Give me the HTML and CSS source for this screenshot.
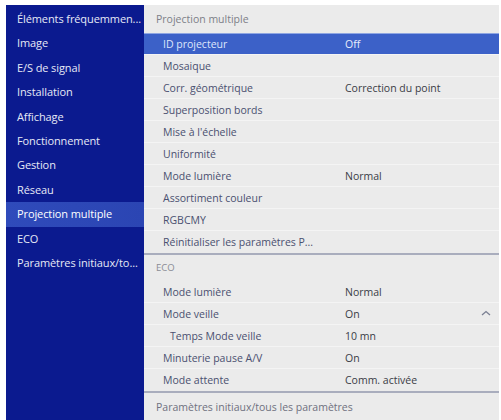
FILE: index.html
```html
<!DOCTYPE html>
<html lang="fr">
<head>
<meta charset="utf-8">
<title>Menu de configuration</title>
<link rel="stylesheet" href="styles.css">
</head>
<body>
<div class="menu">
  <nav class="side">
    <div class="side-item">Éléments fréquemmen...</div>
    <div class="side-item">Image</div>
    <div class="side-item">E/S de signal</div>
    <div class="side-item">Installation</div>
    <div class="side-item">Affichage</div>
    <div class="side-item">Fonctionnement</div>
    <div class="side-item">Gestion</div>
    <div class="side-item">Réseau</div>
    <div class="side-item active">Projection multiple</div>
    <div class="side-item">ECO</div>
    <div class="side-item">Paramètres initiaux/to...</div>
  </nav>
  <section class="panel">
    <div class="group-title">Projection multiple</div>
    <div class="rows">
      <div class="row selected"><span class="label">ID projecteur</span><span class="value">Off</span></div>
      <div class="row"><span class="label">Mosaique</span><span class="value"></span></div>
      <div class="row"><span class="label">Corr. géométrique</span><span class="value">Correction du point</span></div>
      <div class="row"><span class="label">Superposition bords</span><span class="value"></span></div>
      <div class="row"><span class="label">Mise à l'échelle</span><span class="value"></span></div>
      <div class="row"><span class="label">Uniformité</span><span class="value"></span></div>
      <div class="row"><span class="label">Mode lumière</span><span class="value">Normal</span></div>
      <div class="row"><span class="label">Assortiment couleur</span><span class="value"></span></div>
      <div class="row"><span class="label">RGBCMY</span><span class="value"></span></div>
      <div class="row"><span class="label">Réinitialiser les paramètres P...</span><span class="value"></span></div>
    </div>
    <div class="group-title eco">ECO</div>
    <div class="rows">
      <div class="row"><span class="label">Mode lumière</span><span class="value">Normal</span></div>
      <div class="row"><span class="label">Mode veille</span><span class="value">On</span><span class="chev">
        <svg width="10" height="6" viewBox="0 0 10 6"><path d="M1 5 L5 1.5 L9 5" fill="none" stroke="#7a7f92" stroke-width="1.3"/></svg>
      </span></div>
      <div class="row sub"><span class="label">Temps Mode veille</span><span class="value">10 mn</span></div>
      <div class="row"><span class="label">Minuterie pause A/V</span><span class="value">On</span></div>
      <div class="row"><span class="label">Mode attente</span><span class="value">Comm. activée</span></div>
    </div>
    <div class="group-title footer">Paramètres initiaux/tous les paramètres</div>
  </section>
</div>
</body>
</html>
```
FILE: styles.css
```css
html, body {
  margin: 0;
  padding: 0;
  background: #ffffff;
}

body {
  font-family: "Open Sans", "Noto Sans", sans-serif;
  font-size: 10.5px;
}

.menu {
  display: flex;
  margin: 5px 2px 0 6px;
  height: 415px;
}

/* left category column */
.side {
  width: 138px;
  background: #0b1a8f;
  padding-top: 2px;
  display: flex;
  flex-direction: column;
}

.side-item {
  height: 24.4px;
  line-height: 24.4px;
  padding-left: 11px;
  color: #e6e9f6;
  white-space: nowrap;
  font-size: 11px;
  letter-spacing: -0.1px;
}

.side-item.active {
  background: linear-gradient(90deg, #2f4bbb, #2b45b3);
  color: #ffffff;
}

/* right settings panel */
.panel {
  flex: 1;
  background: #ebebeb;
  display: flex;
  flex-direction: column;
}

.group-title {
  height: 28px;
  line-height: 28px;
  padding-left: 12px;
  color: #7d7f88;
  flex: none;
}

.group-title.eco {
  height: 26px;
  line-height: 26px;
  border-top: 2px solid #a9adbd;
  color: #8a8c94;
  font-size: 9.5px;
}

.group-title.footer {
  height: 27px;
  line-height: 28px;
  border-top: 2px solid #a9adbd;
  color: #6f7180;
}

.rows {
  display: flex;
  flex-direction: column;
}

.row {
  height: 22px;
  box-sizing: border-box;
  border-bottom: 1px solid #f4f4f4;
  display: flex;
  align-items: center;
  padding-left: 19px;
  position: relative;
  color: #4a5070;
}

.rows .row:last-child {
  border-bottom: none;
}

.row.selected {
  background: #3c61c8;
  border-top: 1px solid #8fa6e2;
  color: #dfe6fb;
}

.row.sub {
  padding-left: 26px;
}

.label {
  width: 182px;
  flex: none;
  white-space: nowrap;
}

.row.sub .label {
  width: 175px;
}

.value {
  color: #3a3c46;
  white-space: nowrap;
}

.row.selected .value {
  color: #e9eefc;
}

.chev {
  position: absolute;
  right: 8px;
  top: 7px;
  display: flex;
}
```
